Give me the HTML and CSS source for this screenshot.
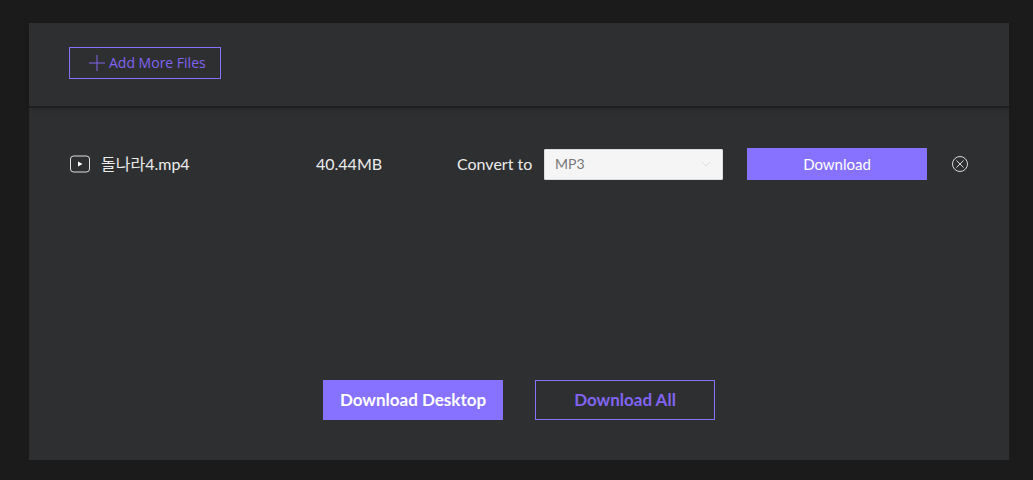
FILE: index.html
```html
<!DOCTYPE html>
<html lang="en">
<head>
<meta charset="utf-8">
<title>File Converter</title>
<link rel="stylesheet" href="styles.css">
</head>
<body>
<main class="converter">
  <header class="toolbar">
    <button class="button add-button" type="button">
      <svg class="plus-icon" viewBox="0 0 16 16" aria-hidden="true"><path d="M8 0v16M0 8h16"/></svg>
      <span>Add More Files</span>
    </button>
  </header>
  <section class="files">
    <div class="file-row">
      <div class="file-name">
        <svg class="video-icon" viewBox="0 0 22 18" aria-hidden="true"><rect x="1.500" y="1" width="19" height="16" rx="3"/><path d="M9 6.500v5l4.500-2.500z"/></svg>
        <span>돌나라4.mp4</span>
      </div>
      <span class="file-size">40.44MB</span>
      <div class="format">
        <label for="format">Convert to</label>
        <div class="select-box">
          <select id="format"><option>MP3</option></select>
          <svg class="chevron" viewBox="0 0 12 8" aria-hidden="true"><path d="M2 2l4 4 4-4"/></svg>
        </div>
      </div>
      <button class="button primary" type="button">Download</button>
      <button class="remove" type="button" aria-label="Remove file">
        <svg viewBox="0 0 18 18" aria-hidden="true"><circle cx="9" cy="9" r="7.500"/><path d="M5.500 5.500l7 7M12.500 5.500l-7 7"/></svg>
      </button>
    </div>
  </section>
  <footer class="actions">
    <button class="button large primary" type="button">Download Desktop</button>
    <button class="button large" type="button">Download All</button>
  </footer>
</main>
</body>
</html>
```
FILE: styles.css
```css
* {
  box-sizing: border-box;
}

body {
  margin: 0;
  min-height: 100vh;
  padding: 23px 24px 20px 29px;
  display: flex;
  background: #1b1b1b;
  color: #ececec;
  font: 16px/24px "Lato", "Noto Sans CJK KR", sans-serif;
}

.converter {
  flex: 1;
  display: flex;
  flex-direction: column;
  background: #2e2f31;
}

.toolbar {
  padding: 24px 40px 27px;
  border-bottom: 2px solid #1e1f20;
  box-shadow: 0 2px 4px rgba(0, 0, 0, 0.15);
}

.button {
  display: flex;
  align-items: center;
  justify-content: center;
  height: 32px;
  padding: 0 15px;
  border: 1px solid #8672ff;
  background: transparent;
  color: #8264f2;
  font: inherit;
  font-size: 15px;
  cursor: pointer;
}

.button.primary {
  background: #8672ff;
  color: #fff;
}

.add-button {
  justify-content: flex-start;
  width: 152px;
  gap: 4px;
  padding: 0 0 0 19px;
  font-family: "Open Sans", sans-serif;
  font-size: 14px;
  white-space: nowrap;
}

.plus-icon {
  flex: none;
  width: 16px;
  height: 16px;
  fill: none;
  stroke: currentColor;
}

.files {
  flex: 1;
  padding: 40px 40px 0;
}

.file-row {
  display: grid;
  grid-template-columns: 223fr 117fr 266px 180px 18px;
  column-gap: 24px;
  align-items: center;
}

.format {
  display: flex;
  align-items: center;
  justify-content: space-between;
}

.file-name {
  display: flex;
  align-items: center;
  gap: 10px;
}

.video-icon {
  width: 22px;
  height: 18px;
  fill: none;
  stroke: #e0e0e0;
}

.video-icon path {
  fill: #fff;
  stroke: none;
}

.select-box {
  display: grid;
  align-items: center;
  width: 179px;
}

.select-box > * {
  grid-area: 1 / 1;
}

.select-box select {
  width: 100%;
  height: 31px;
  padding: 0 10px;
  border: 1px solid #dcdcdc;
  border-radius: 1px;
  appearance: none;
  background: #f5f5f5;
  color: #777;
  font: inherit;
  font-size: 14px;
}

.chevron {
  justify-self: end;
  width: 12px;
  height: 8px;
  margin-right: 11px;
  fill: none;
  stroke: #dedede;
  pointer-events: none;
}

.remove {
  width: 18px;
  height: 18px;
  padding: 0;
  border: 0;
  background: none;
  cursor: pointer;
}

.remove svg {
  display: block;
  fill: none;
  stroke: #d8d8d8;
}

.actions {
  display: flex;
  justify-content: center;
  gap: 32px;
  padding: 0 40px 40px;
}

.button.large {
  width: 180px;
  height: 40px;
  font-size: 17px;
  font-weight: 700;
}
```
